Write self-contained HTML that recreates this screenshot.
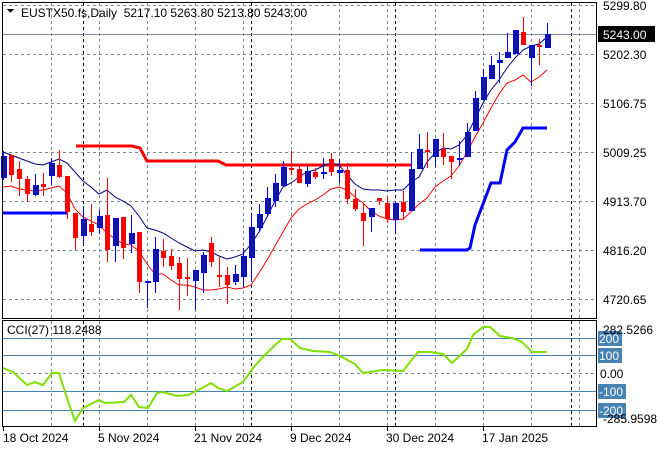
<!DOCTYPE html>
<html><head><meta charset="utf-8"><style>
html,body{margin:0;padding:0;background:#fff;}
svg{display:block;font-family:"Liberation Sans",Tahoma,sans-serif;}
</style></head><body>
<svg width="660" height="450" viewBox="0 0 660 450" xmlns="http://www.w3.org/2000/svg" shape-rendering="crispEdges">
<rect width="660" height="450" fill="#fff"/>
<g stroke="#7f8a96" stroke-dasharray="3,3" stroke-width="1">
<path d="M51.5 3V318M99.5 3V318M147.5 3V318M195.5 3V318M243.5 3V318M291.5 3V318M339.5 3V318M387.5 3V318M435.5 3V318M483.5 3V318M531.5 3V318M579.5 3V318"/>
<path d="M51.5 321V426M99.5 321V426M147.5 321V426M195.5 321V426M243.5 321V426M291.5 321V426M339.5 321V426M387.5 321V426M435.5 321V426M483.5 321V426M531.5 321V426M579.5 321V426"/>
<path d="M3 5.5H597M3 54.5H597M3 103.5H597M3 152.5H597M3 201.5H597M3 250.5H597M3 299.5H597M3 373.5H597"/>
</g>
<g stroke="#000" stroke-dasharray="3,3" stroke-width="1">
<path d="M83.5 3V318M251.5 3V318M395.5 3V318M571.5 3V318M83.5 321V426M251.5 321V426M395.5 321V426M571.5 321V426"/>
</g>
<path d="M3 34.5H597" stroke="#7f8a96"/>
<g fill="none" stroke-width="3" shape-rendering="auto">
<polyline stroke="#ff0000" points="76,146 132,146 140,148 147,161 218,161 226,165 411,165"/>
<polyline stroke="#0000ff" points="3,213 67,213"/>
<polyline stroke="#0000ff" points="420,250 467,250 470,248 475,225 491,183 500,183 507,150 515,142 523,128 547,128"/>
</g>
<g fill="none" stroke-width="1" shape-rendering="auto">
<polyline stroke="#000080" points="3,152 11,155 35,164 43,165 51,162 59,159 67,163 75,172 83,181 91,187 99,194 107,190 115,197 123,201 131,206 139,216 147,228 155,230 163,233 171,238 179,243 187,247 195,251 203,250 211,252 219,256 227,259 235,257 243,254 251,244 259,232 267,217 275,201 283,187 291,183 299,177 307,172 315,170 323,166 331,163 339,165 347,175 355,184 363,189 371,190 379,190 387,191 395,190 403,190 411,182 419,177 427,162 435,153 443,148 451,149 459,145 467,135 475,119 483,103 491,90 499,80 507,68 515,58 523,50 531,46 539,44 547,37"/>
<polyline stroke="#ff0000" points="3,187 11,186 19,189 35,191 43,190 51,188 59,186 67,193 75,209 83,217 91,221 99,225 107,233 115,239 123,244 131,245 139,251 147,264 155,274 163,274 171,280 179,285 187,285 195,287 203,290 211,290 219,289 227,287 235,289 243,288 251,285 259,273 267,260 275,246 283,232 291,218 299,209 307,204 315,200 323,195 331,189 339,187 347,190 355,197 363,203 371,211 379,216 387,219 395,220 403,219 411,212 419,204 427,198 435,187 443,181 451,176 459,166 467,152 475,137 483,123 491,108 499,94 507,83 515,80 523,75 531,82 539,77 547,70"/>
</g>
<!-- red candles -->
<path stroke="#ff0000" fill="none" d="M11.5 155V182M19.5 161V196M27.5 176V202M43.5 173V196M59.5 150V178M67.5 176V219M75.5 213V250M91.5 204V236M107.5 178V262M123.5 217V259M139.5 232V293M163.5 239V267M171.5 249V270M179.5 257V310M187.5 258V296M211.5 237V267M219.5 257V287M227.5 267V304M291.5 151V175M299.5 165V183M315.5 168V179M331.5 153V176M347.5 163V204M355.5 189V211M363.5 204V246M379.5 198V205M387.5 196V223M403.5 191V220M427.5 132V168M443.5 133V165M451.5 156V179M523.5 17V45M539.5 39V65"/>
<path fill="#ff0000" d="M9 155h5v20h-5zM17 169h5v10h-5zM25 179h5v15h-5zM41 184h5v3h-5zM57 165h5v12h-5zM65 176h5v36h-5zM73 213h5v25h-5zM89 224h5v8h-5zM105 215h5v35h-5zM121 217h5v31h-5zM137 232h5v50h-5zM161 251h5v7h-5zM169 256h5v10h-5zM177 263h5v16h-5zM185 277h5v2h-5zM209 243h5v19h-5zM217 275h5v2h-5zM225 275h5v10h-5zM289 168h5v2h-5zM297 169h5v14h-5zM313 172h5v5h-5zM329 159h5v13h-5zM345 170h5v29h-5zM353 199h5v10h-5zM361 213h5v8h-5zM377 198h5v3h-5zM385 203h5v16h-5zM401 202h5v10h-5zM425 150h5v2h-5zM441 149h5v8h-5zM449 156h5v6h-5zM521 32h5v13h-5zM537 45h5v2h-5z"/>
<!-- blue candles -->
<path stroke="#0000ff" fill="none" d="M3.5 151V180M35.5 174V196M51.5 158V185M83.5 206V244M99.5 210V234M115.5 218V262M131.5 215V253M147.5 281V308M155.5 237V293M195.5 270V310M203.5 252V293M235.5 265V285M243.5 248V287M251.5 215V282M259.5 204V232M267.5 187V217M275.5 174V207M283.5 161V186M307.5 165V187M323.5 158V179M339.5 159V183M371.5 208V232M395.5 201V232M411.5 152V211M419.5 134V169M435.5 139V167M459.5 141V166M467.5 123V157M475.5 91V131M483.5 69V100M491.5 56V79M499.5 52V83M507.5 33V58M515.5 30V54M531.5 45V86M547.5 23V48"/>
<path fill="#10189c" stroke="#0000ff" stroke-width="1" d="M1.5 156.5h5v21h-5zM33.5 185.5h5v9h-5zM49.5 163.5h5v12h-5zM81.5 219.5h5v16h-5zM97.5 216.5h5v11h-5zM113.5 218.5h5v27h-5zM129.5 233.5h5v10h-5zM145.5 281.5h5v1h-5zM153.5 249.5h5v32h-5zM193.5 270.5h5v10h-5zM201.5 255.5h5v17h-5zM233.5 274.5h5v7h-5zM241.5 256.5h5v20h-5zM249.5 227.5h5v30h-5zM257.5 214.5h5v13h-5zM265.5 198.5h5v15h-5zM273.5 183.5h5v17h-5zM281.5 167.5h5v18h-5zM305.5 171.5h5v12h-5zM321.5 172.5h5v1h-5zM337.5 170.5h5v2h-5zM369.5 208.5h5v8h-5zM393.5 203.5h5v16h-5zM409.5 169.5h5v41h-5zM417.5 149.5h5v19h-5zM433.5 139.5h5v17h-5zM457.5 158.5h5v1h-5zM465.5 132.5h5v24h-5zM473.5 98.5h5v32h-5zM481.5 77.5h5v22h-5zM489.5 65.5h5v13h-5zM497.5 60.5h5v2h-5zM505.5 52.5h5v5h-5zM513.5 30.5h5v23h-5zM529.5 45.5h5v12h-5zM545.5 34.5h5v13h-5z"/>
<g stroke="#4682b4"><path d="M3 338.5H597M3 355.5H597M3 391.5H597M3 410.5H597"/></g>
<polyline fill="none" stroke="#7fe000" stroke-width="2" shape-rendering="auto" points="3,368 13,372 27,385 35,382 43,385 52,373 59,373 67,398 75,421 83,408 99,400 105,403 124,402 131,395 139,407 148,408 157,393 163,392 177,396 188,395 202,388 211,383 218,388 227,391 243,382 253,368 262,358 275,345 282,339 290,339 300,348 313,351 330,352 340,356 355,364 363,373 383,370 403,371 418,352 430,352 443,354 452,363 467,349 473,335 483,327 490,327 500,336 512,338 522,342 532,352 547,352"/>
<g fill="none" stroke="#000">
<rect x="2.5" y="2.5" width="594" height="316"/>
<rect x="2.5" y="320.5" width="594" height="106"/>
</g>
<g stroke="#000"><path d="M3.5 427V431M99.5 427V431M195.5 427V431M291.5 427V431M387.5 427V431M483.5 427V431"/></g>
<path d="M7 9H14L10.5 13Z" fill="#000"/>
<text x="21" y="17" font-size="12" fill="#000" xml:space="preserve">EUSTX50.fs,Daily  5217.10 5263.80 5213.80 5243.00</text>
<g font-size="12" fill="#000">
<text x="603" y="10">5299.80</text>
<text x="603" y="59">5202.30</text>
<text x="603" y="108">5106.75</text>
<text x="603" y="157">5009.25</text>
<text x="603" y="206">4913.70</text>
<text x="603" y="255">4816.20</text>
<text x="603" y="304">4720.65</text>
</g>
<rect x="598" y="26" width="57" height="16" fill="#000"/>
<text x="603" y="39" font-size="12" fill="#fff">5243.00</text>
<g fill="#4682b4">
<rect x="598" y="331" width="24" height="15"/>
<rect x="598" y="348" width="24" height="15"/>
<rect x="598" y="384" width="28" height="15"/>
<rect x="598" y="403" width="28" height="15"/>
</g>
<g font-size="12">
<text x="603" y="334" fill="#000">282.5266</text>
<text x="599" y="343" fill="#fff">200</text>
<text x="599" y="360" fill="#fff">100</text>
<text x="600" y="378" fill="#000">0.00</text>
<text x="599" y="396" fill="#fff">-100</text>
<text x="599" y="415" fill="#fff">-200</text>
<text x="603" y="423" fill="#000">-285.9598</text>
<text x="7" y="334" fill="#000">CCI(27) 118.2488</text>
</g>
<g font-size="12" fill="#000">
<text x="3" y="442">18 Oct 2024</text>
<text x="98" y="442">5 Nov 2024</text>
<text x="194" y="442">21 Nov 2024</text>
<text x="290" y="442">9 Dec 2024</text>
<text x="386" y="442">30 Dec 2024</text>
<text x="482" y="442">17 Jan 2025</text>
</g>
</svg>
</body></html>
